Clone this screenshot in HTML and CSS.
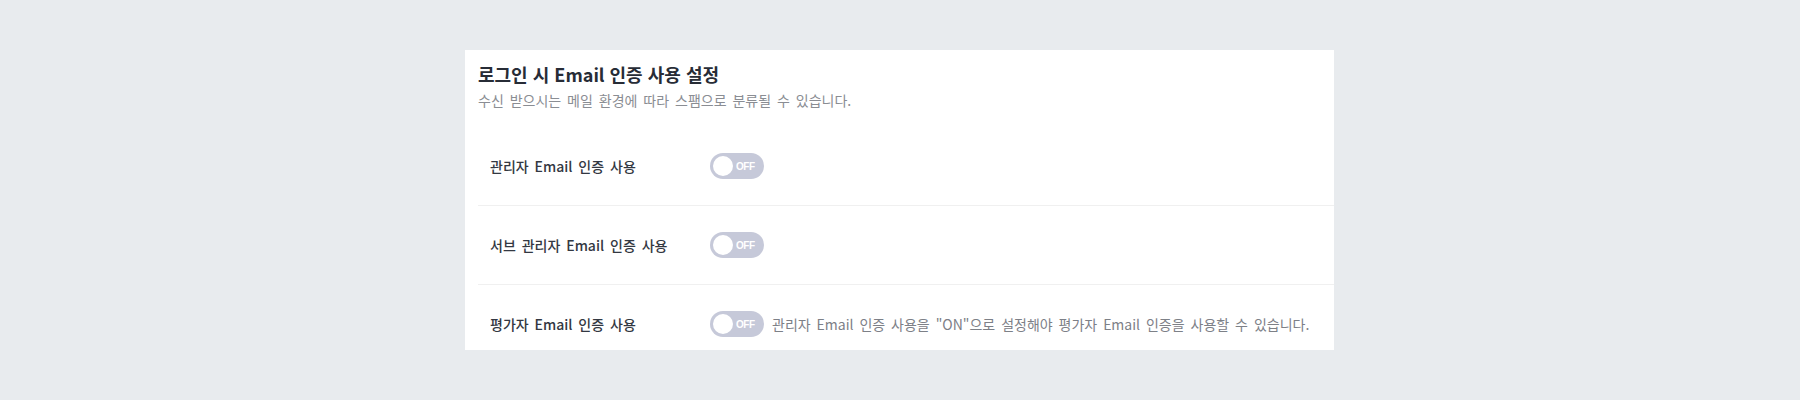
FILE: index.html
```html
<!DOCTYPE html>
<html lang="ko">
<head>
<meta charset="utf-8">
<link rel="stylesheet" href="styles.css">
</head>
<body>
<section class="card">
  <header class="head">
    <h2 class="title">로그인 시 Email 인증 사용 설정</h2>
    <p class="desc">수신 받으시는 메일 환경에 따라 스팸으로 분류될 수 있습니다.</p>
  </header>
  <div class="rows">
    <div class="row">
      <div class="label">관리자 Email 인증 사용</div>
      <div class="ctrl"><span class="toggle"><span class="knob"></span><span class="state">OFF</span></span></div>
    </div>
    <div class="row">
      <div class="label">서브 관리자 Email 인증 사용</div>
      <div class="ctrl"><span class="toggle"><span class="knob"></span><span class="state">OFF</span></span></div>
    </div>
    <div class="row last">
      <div class="label">평가자 Email 인증 사용</div>
      <div class="ctrl"><span class="toggle"><span class="knob"></span><span class="state">OFF</span></span><span class="hint">관리자 Email 인증 사용을 "ON"으로 설정해야 평가자 Email 인증을 사용할 수 있습니다.</span></div>
    </div>
  </div>
</section>
</body>
</html>
```
FILE: styles.css
```css
html, body {
  margin: 0;
  padding: 0;
}
body {
  background: #e8ebee;
  font-family: "Noto Sans CJK KR", "Noto Sans", sans-serif;
  color: #333;
  height: 400px;
  overflow: hidden;
}
.card {
  margin: 50px 0 0 465px;
  width: 869px;
  height: 300px;
  box-sizing: border-box;
  background: #fff;
  padding: 13px 0 0 13px;
  overflow: hidden;
}
.head {
  padding-bottom: 17px;
}
.title {
  margin: 0;
  font-size: 18px;
  line-height: 22px;
  font-weight: 700;
  color: #272c36;
}
.desc {
  margin: 5px 0 0;
  font-size: 14px;
  line-height: 20px;
  color: #8a8d93;
  word-spacing: 2px;
}
.row {
  display: flex;
  align-items: center;
  padding: 26px 0 26px 12px;
  border-bottom: 1px solid #f0f0f0;
}
.row.last {
  border-bottom: none;
}
.label {
  width: 220px;
  flex: none;
  font-size: 14px;
  font-weight: 500;
  color: #333842;
  line-height: 20px;
  word-spacing: 2px;
}
.ctrl {
  display: flex;
  align-items: center;
}
.toggle {
  display: flex;
  align-items: center;
  width: 54px;
  height: 26px;
  box-sizing: border-box;
  padding-left: 3px;
  border-radius: 13px;
  background: #c6c9d9;
}
.knob {
  width: 20px;
  height: 20px;
  border-radius: 50%;
  background: #fff;
  flex: none;
}
.state {
  margin-left: 3px;
  font-family: "Liberation Sans", Arial, sans-serif;
  font-size: 10px;
  font-weight: 700;
  color: #fff;
  letter-spacing: -0.5px;
}
.hint {
  margin-left: 8px;
  font-size: 14px;
  line-height: 20px;
  color: #7d8087;
  word-spacing: 2px;
}
```
